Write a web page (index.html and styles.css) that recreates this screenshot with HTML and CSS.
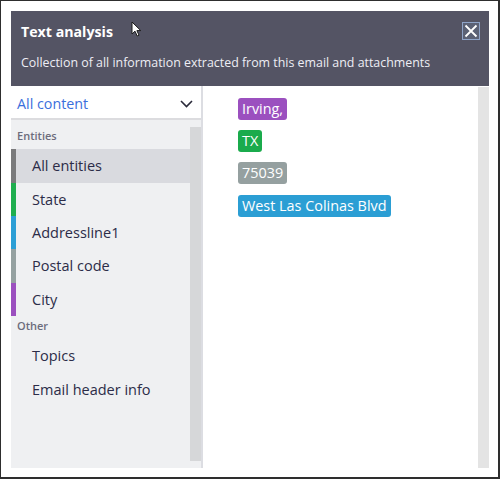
FILE: index.html
```html
<!DOCTYPE html>
<html>
<head>
<meta charset="utf-8">
<link rel="stylesheet" href="styles.css">
</head>
<body>
<div class="frame">
  <div class="dialog">
    <div class="header">
      <div class="title-row">
        <span class="title">Text analysis</span>
        <button class="close" aria-label="Close">
          <svg width="14" height="14" viewBox="0 0 14 14"><path d="M1.5 1.5 L12.5 12.5 M12.5 1.5 L1.5 12.5" stroke="#ffffff" stroke-width="1.8" fill="none"/></svg>
        </button>
      </div>
      <div class="subtitle">Collection of all information extracted from this email and attachments</div>
    </div>
    <div class="body">
      <div class="left">
        <div class="dropdown">
          <span class="dd-label">All content</span>
          <svg class="chev" width="13" height="8" viewBox="0 0 13 8"><path d="M1 1 L6.5 6.5 L12 1" stroke="#2a2a3a" stroke-width="1.6" fill="none"/></svg>
        </div>
        <div class="scroll-area">
          <div class="list">
            <div class="group-label first">Entities</div>
            <div class="item selected"><span class="bar bar-all"></span><span class="item-text">All entities</span></div>
            <div class="item"><span class="bar bar-state"></span><span class="item-text">State</span></div>
            <div class="item"><span class="bar bar-addr"></span><span class="item-text">Addressline1</span></div>
            <div class="item"><span class="bar bar-postal"></span><span class="item-text">Postal code</span></div>
            <div class="item"><span class="bar bar-city"></span><span class="item-text">City</span></div>
            <div class="group-label">Other</div>
            <div class="item"><span class="bar"></span><span class="item-text">Topics</span></div>
            <div class="item"><span class="bar"></span><span class="item-text">Email header info</span></div>
          </div>
          <div class="scrollbar-left"></div>
        </div>
      </div>
      <div class="right">
        <div class="tags">
          <span class="tag tag-city">Irving,</span>
          <span class="tag tag-state">TX</span>
          <span class="tag tag-postal">75039</span>
          <span class="tag tag-addr">West Las Colinas Blvd</span>
        </div>
        <div class="scrollbar-right"></div>
      </div>
    </div>
  </div>
  <svg class="cursor" width="12" height="17" viewBox="0 0 12 17"><path d="M1 1 L1 13 L4 10.2 L6.2 15 L8 14.2 L5.9 9.6 L9.8 9.6 Z" fill="#ffffff" stroke="#1a1a1a" stroke-width="1" stroke-linejoin="round"/></svg>
</div>
</body>
</html>
```

FILE: styles.css
```css
* { box-sizing: border-box; }
html, body { margin: 0; padding: 0; background: #ffffff; }
body { font-family: "Open Sans", "Noto Sans", sans-serif; }

.frame {
  position: relative;
  width: 500px;
  height: 479px;
  border-style: solid;
  border-color: #2e2e2e;
  border-width: 1px 2px 2px 1px;
  padding: 10px 9px 9px 10px;
  background: #ffffff;
}

.dialog {
  width: 478px;
  height: 457px;
  display: flex;
  flex-direction: column;
}

.header {
  height: 75px;
  background: #545464;
  padding: 0 9px 0 10px;
  color: #ffffff;
}
.title-row {
  display: flex;
  justify-content: space-between;
  align-items: flex-start;
  padding-top: 11px;
  height: 38px;
}
.title {
  font-weight: 700;
  font-size: 14.2px;
  line-height: 20px;
}
.close {
  width: 18px;
  height: 18px;
  margin-top: 0;
  padding: 0;
  border: 1px solid #8ea3c8;
  background: #5b6175;
  display: flex;
  align-items: center;
  justify-content: center;
}
.subtitle {
  font-size: 12.4px;
  line-height: 18px;
  color: #eeeef4;
  padding-top: 5px;
}

.body {
  flex: 1;
  display: flex;
  min-height: 0;
}

.left {
  width: 190px;
  display: flex;
  flex-direction: column;
  background: #eff0f2;
}
.dropdown {
  height: 34px;
  background: #ffffff;
  border-bottom: 2.5px solid #dcdcdf;
  display: flex;
  align-items: center;
  justify-content: space-between;
  padding: 3px 8px 0 6px;
}
.dd-label {
  color: #3b6fdc;
  font-size: 14.3px;
  line-height: 20px;
}
.chev { margin-top: 0; }

.scroll-area {
  flex: 1;
  display: flex;
  min-height: 0;
}
.list {
  flex: 1;
}
.scrollbar-left {
  width: 11px;
  margin: 7px 0 7px 0;
  background: #d6d7d9;
}

.group-label {
  font-size: 11px;
  font-weight: 600;
  color: #6c6c7c;
  line-height: 15px;
  height: 23.33px;
  padding: 2px 0 0 6px;
}
.group-label.first {
  height: 29.33px;
  padding-top: 8px;
}

.item {
  height: 33.33px;
  display: flex;
  align-items: stretch;
}
.item.selected { background: #d9dadf; }
.bar { width: 5px; flex: none; }
.bar-all { background: #7a7a7c; }
.bar-state { background: #1fae4f; }
.bar-addr { background: #2c9fd6; }
.bar-postal { background: #95a1a1; }
.bar-city { background: #9b50bf; }
.item-text {
  display: flex;
  align-items: center;
  padding-left: 16px;
  font-size: 14.5px;
  color: #2c2c48;
}

.right {
  flex: 1;
  display: flex;
  border-left: 2px solid #dcdde2;
  background: #ffffff;
}
.tags {
  flex: 1;
  display: flex;
  flex-direction: column;
  align-items: flex-start;
  padding: 11.7px 0 0 35px;
  gap: 10.4px;
}
.tag {
  color: #ffffff;
  font-size: 14.4px;
  line-height: 22px;
  height: 22px;
  padding: 0 4px;
  border-radius: 3px;
}
.tag-city { background: #9b50bf; }
.tag-state { background: #1aab4c; }
.tag-postal { background: #95a0a0; }
.tag-addr { background: #2b9ed4; }

.scrollbar-right {
  width: 11px;
  margin-top: 1px;
  background: #e4e4e4;
}

.cursor {
  position: absolute;
  left: 130px;
  top: 20px;
}
```
